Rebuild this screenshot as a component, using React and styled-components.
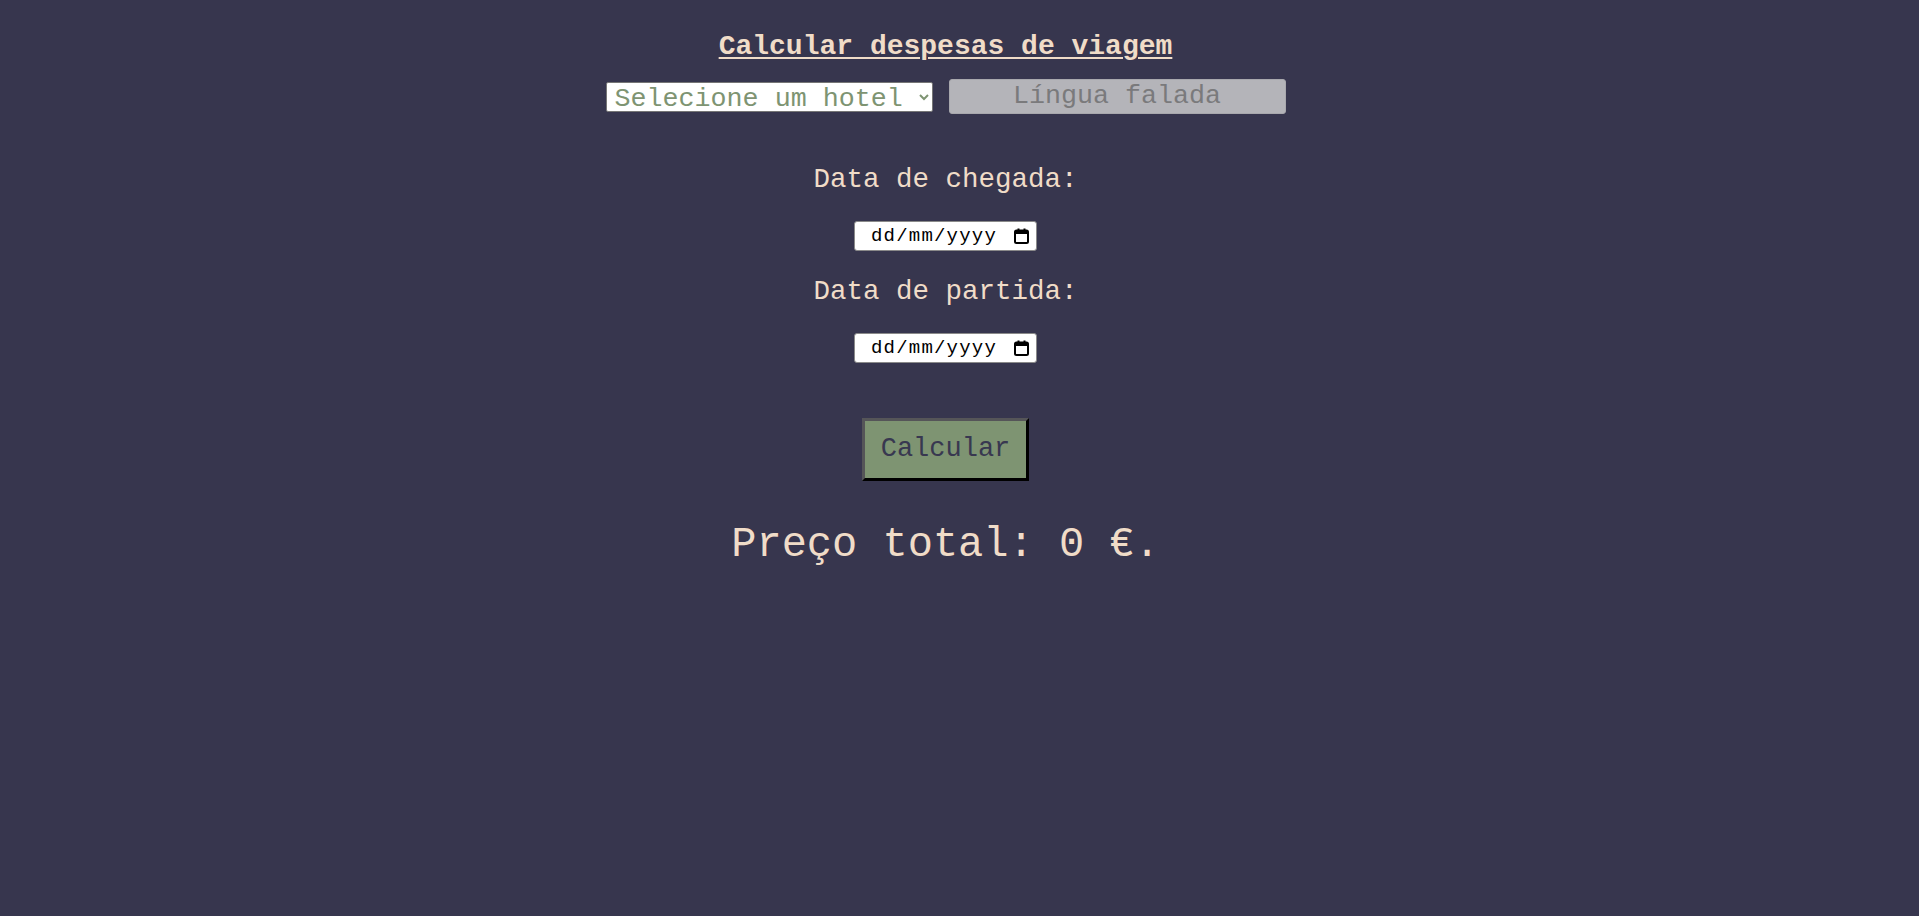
import styled, { createGlobalStyle } from "styled-components";

const BG = "#37364e";
const CREAM = "#f0dcc8";
const GREEN = "#7e9472";

const GlobalStyles = createGlobalStyle`
  html, body {
    margin: 0;
    background: ${BG};
    min-height: 100%;
  }
  body {
    font-family: "Liberation Mono", "DejaVu Sans Mono", monospace;
    color: ${CREAM};
  }
`;

const Page = styled.div`
  min-height: 916px;
  display: flex;
  flex-direction: column;
  align-items: center;
  padding: 31px 28px 0 0;
  box-sizing: border-box;
`;

const Title = styled.h1`
  margin: 0;
  font-size: 28px;
  line-height: 32px;
  font-weight: bold;
  text-decoration: underline;
  text-decoration-thickness: 2px;
  text-underline-offset: 3px;
  color: ${CREAM};
`;

const Row = styled.div`
  display: flex;
  align-items: center;
  gap: 16px;
  margin-top: 16px;
`;

const HotelSelect = styled.select`
  width: 327px;
  height: 30px;
  box-sizing: border-box;
  padding: 0 4px;
  font-family: "Liberation Mono", monospace;
  font-size: 26.7px;
  color: ${GREEN};
  background: #fff;
  border: 1px solid #767676;
  border-radius: 2px;
  outline: none;
`;

const LanguageBox = styled.button`
  width: 337px;
  height: 35px;
  box-sizing: border-box;
  background: #b4b4b9;
  color: #7a7a7c;
  border: 1px solid #a8a8ad;
  border-radius: 3px;
  font-family: "Liberation Mono", monospace;
  font-size: 26.7px;
  line-height: 33px;
  padding: 0;
  text-align: center;
`;

const Label = styled.label`
  font-size: 27.5px;
  line-height: 32px;
  margin-top: ${(p) => p.$top}px;
  color: ${CREAM};
`;

const DateBox = styled.div`
  width: 183px;
  height: 30px;
  box-sizing: border-box;
  margin-top: 25px;
  display: flex;
  align-items: center;
  justify-content: space-between;
  padding: 0 7px 0 16px;
  background: #fff;
  border: 1px solid #8a8a8a;
  border-radius: 3px;
  font-family: "Liberation Mono", monospace;
  font-size: 19px;
  letter-spacing: 1.2px;
  color: #000;
`;

const CalcButton = styled.button`
  width: 167px;
  height: 63px;
  box-sizing: border-box;
  margin-top: 55px;
  background: ${GREEN};
  color: #383850;
  border: 3px solid;
  border-color: #555558 #000 #000 #555558;
  font-family: "Liberation Mono", monospace;
  font-size: 27px;
  padding: 0 0 2px 0;
  cursor: pointer;
`;

const Total = styled.p`
  margin: 40px 0 0;
  font-size: 42px;
  line-height: 48px;
  color: ${CREAM};
`;

const CalendarIcon = () => (
  <svg width="15" height="16" viewBox="0 0 15 16">
    <rect x="1" y="2.5" width="13" height="12.5" rx="1.5" fill="none" stroke="#000" strokeWidth="2" />
    <rect x="1" y="3" width="13" height="3" fill="#000" />
    <rect x="3.5" y="0.5" width="2" height="3" fill="#000" />
    <rect x="9.5" y="0.5" width="2" height="3" fill="#000" />
  </svg>
);

const DateField = () => (
  <DateBox>
    <span>dd/mm/yyyy</span>
    <CalendarIcon />
  </DateBox>
);

export default function App() {
  return (
    <Page>
      <GlobalStyles />
      <Title>Calcular despesas de viagem</Title>
      <Row>
        <HotelSelect defaultValue="">
          <option value="" disabled>
            Selecione um hotel
          </option>
        </HotelSelect>
        <LanguageBox type="button" disabled>
          Língua falada
        </LanguageBox>
      </Row>
      <Label $top={50}>Data de chegada:</Label>
      <DateField />
      <Label $top={25}>Data de partida:</Label>
      <DateField />
      <CalcButton type="button">Calcular</CalcButton>
      <Total>Preço total: 0 €.</Total>
    </Page>
  );
}
